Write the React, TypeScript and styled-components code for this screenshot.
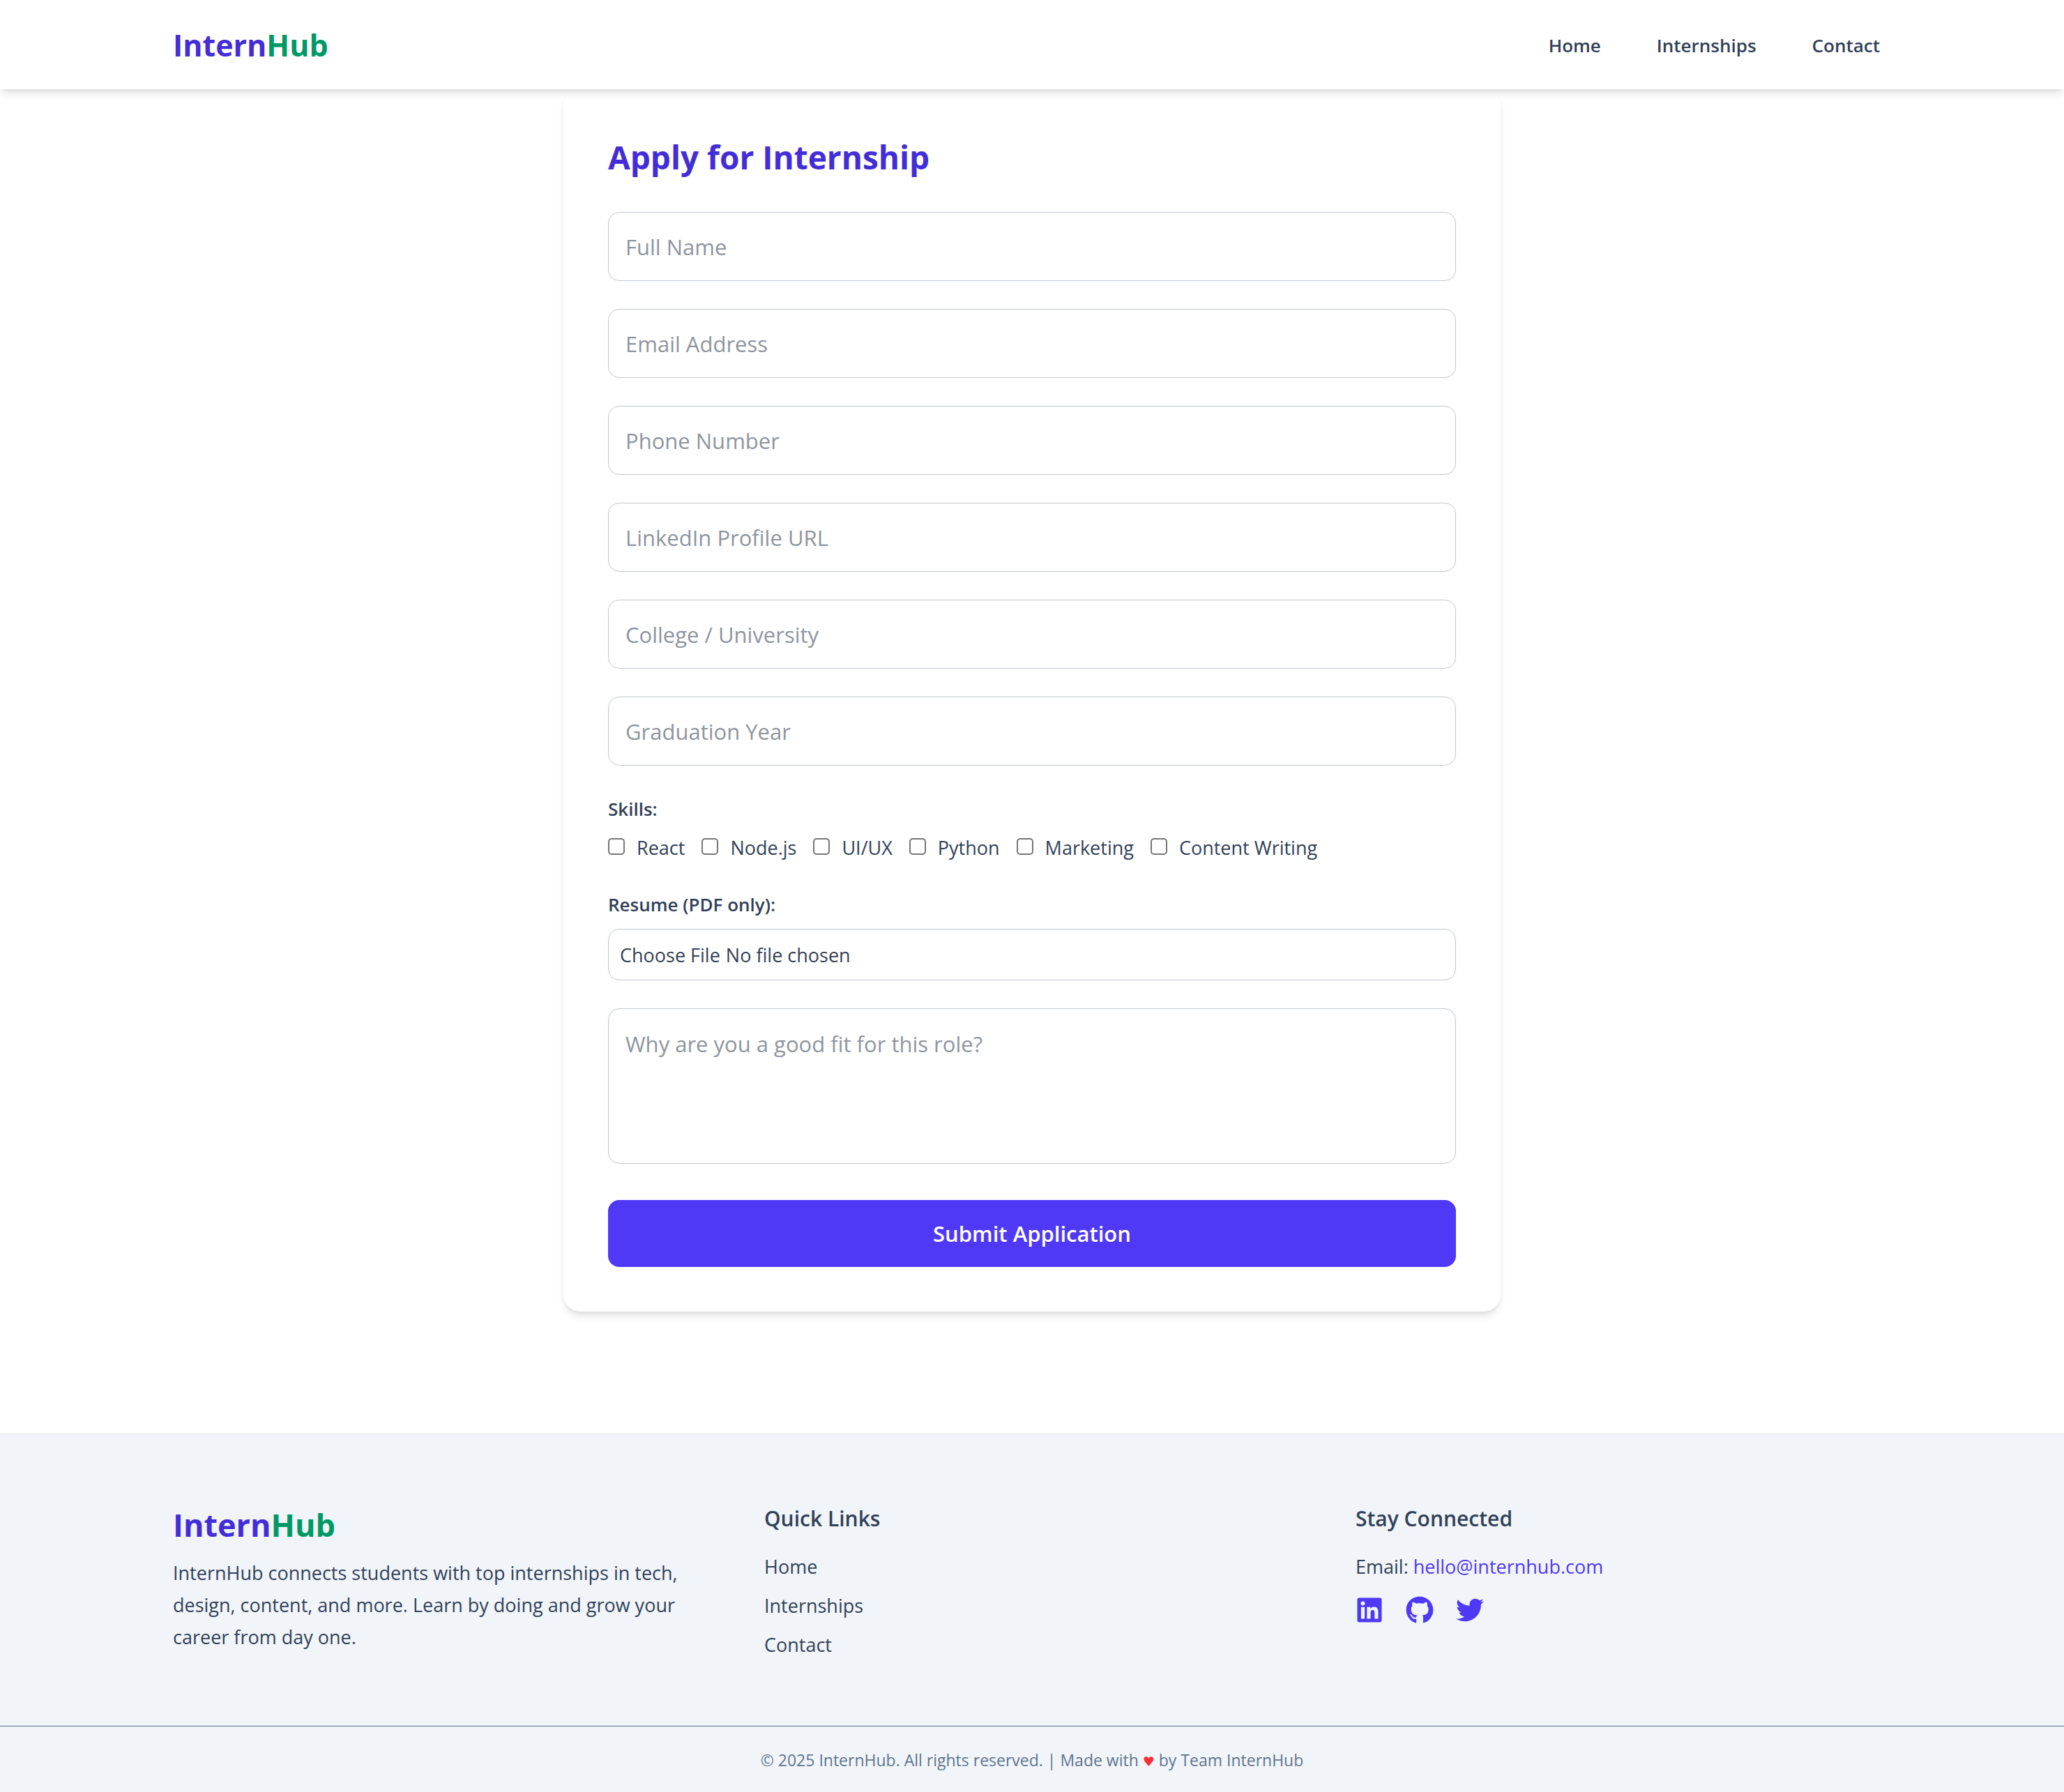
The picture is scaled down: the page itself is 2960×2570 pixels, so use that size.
import React from "react";
import styled, { createGlobalStyle } from "styled-components";
import { FaGithub, FaLinkedin, FaTwitter } from "react-icons/fa";

const GlobalStyle = createGlobalStyle`
  *, *::before, *::after {
    box-sizing: border-box;
  }

  body {
    margin: 0;
    background: #ffffff;
    color: #314158;
    font-family: "Segoe UI", "Open Sans", "Noto Sans", sans-serif;
    font-size: 27px;
    line-height: 40px;
  }

  h2, h3, p, ul, fieldset {
    margin: 0;
    padding: 0;
  }

  a {
    color: inherit;
    text-decoration: none;
  }

  input, textarea, button {
    margin: 0;
    font-family: inherit;
  }
`;

const Page = styled.div`
  display: flex;
  flex-direction: column;
  min-height: 100vh;
`;

const Container = styled.div`
  width: 100%;
  max-width: 2560px;
  margin: 0 auto;
  padding: 0 48px;
`;

const Header = styled.header`
  position: sticky;
  top: 0;
  z-index: 10;
  background: #ffffff;
  box-shadow: 0 8px 12px -2px rgba(0, 0, 0, 0.1), 0 4px 8px -4px rgba(0, 0, 0, 0.1);
`;

const HeaderRow = styled(Container)`
  display: flex;
  align-items: center;
  justify-content: space-between;
  padding-top: 33px;
  padding-bottom: 31px;
`;

const Brand = styled.a<{ $size: number; $line: number }>`
  display: block;
  color: #432dd7;
  font-size: ${(p) => p.$size}px;
  font-weight: 700;
  line-height: ${(p) => p.$line}px;
`;

const BrandAccent = styled.span`
  color: #009966;
`;

const Nav = styled.nav`
  display: flex;
  gap: 48px;
`;

const NavLink = styled.a`
  padding: 0 16px;
  font-size: 26px;
  font-weight: 600;
`;

const Main = styled.main`
  flex: 1;
  padding-bottom: 96px;
`;

const Card = styled.section`
  max-width: 1344px;
  margin: 0 auto;
  padding: 64px;
  border-radius: 24px;
  background: #ffffff;
  box-shadow: 0 8px 12px -2px rgba(0, 0, 0, 0.1), 0 4px 8px -4px rgba(0, 0, 0, 0.1);
`;

const Title = styled.h2`
  margin-bottom: 46px;
  color: #432dd7;
  font-size: 46px;
  font-weight: 700;
  line-height: 66px;
`;

const Form = styled.form`
  display: flex;
  flex-direction: column;
  gap: 40px;
`;

const TextField = styled.input`
  width: 100%;
  height: 99px;
  padding: 24px;
  border: 1px solid #c1c6cf;
  border-radius: 16px;
  background: transparent;
  color: #1e2939;
  font-size: 31px;
  line-height: 48px;

  &::placeholder {
    color: #8e959f;
    opacity: 1;
  }
`;

const MessageField = styled(TextField).attrs({ as: "textarea" })`
  display: block;
  height: 223px;
  padding: 26px 24px;
  resize: none;
`;

const Group = styled.div`
  display: flex;
  flex-direction: column;
  gap: 14px;
`;

const SkillSet = styled.fieldset`
  border: 0;
  min-width: 0;
`;

const Legend = styled.legend`
  display: block;
  margin-bottom: 14px;
  padding: 0;
  font-size: 26px;
  font-weight: 600;
  line-height: 44px;
`;

const GroupLabel = styled.label`
  font-size: 26px;
  font-weight: 600;
  line-height: 42px;
`;

const SkillRow = styled.div`
  display: flex;
  flex-wrap: wrap;
  gap: 24px;
`;

const Skill = styled.label`
  display: flex;
  align-items: baseline;
  gap: 17px;
`;

const Checkbox = styled.input`
  appearance: none;
  width: 24px;
  height: 24px;
  border: 2px solid #767676;
  border-radius: 5px;
  background: #ffffff;

  &:checked {
    border-color: #4f39f6;
    background: #4f39f6;
  }
`;

const FileField = styled.input`
  width: 100%;
  height: 74px;
  padding: 17px 16px 15px;
  border: 1px solid #c1c6cf;
  border-radius: 16px;
  color: #364153;
  font-size: 27px;
  line-height: 40px;

  &::file-selector-button {
    margin: 0 8px 0 0;
    padding: 0;
    border: 0;
    background: transparent;
    color: inherit;
    font: inherit;
  }
`;

const SubmitButton = styled.button`
  margin-top: 12px;
  padding: 24px;
  border: 0;
  border-radius: 16px;
  background: #4f39f6;
  color: #ffffff;
  font-size: 31px;
  font-weight: 600;
  line-height: 48px;
  cursor: pointer;
`;

const Footer = styled.footer`
  border-top: 1px solid #d9e1eb;
  background: #f1f5f9;
`;

const FooterGrid = styled(Container)`
  display: grid;
  grid-template-columns: repeat(3, 1fr);
  gap: 80px;
  padding-top: 96px;
  padding-bottom: 96px;
`;

const About = styled.p`
  margin-top: 12px;
  line-height: 46px;
`;

const FooterHeading = styled.h3`
  margin-bottom: 24px;
  font-size: 30px;
  font-weight: 600;
  line-height: 50px;
`;

const LinkList = styled.ul`
  display: flex;
  flex-direction: column;
  gap: 16px;
  list-style: none;
`;

const EmailLink = styled.a`
  color: #4f39f6;
`;

const Socials = styled.div`
  display: flex;
  gap: 32px;
  margin-top: 22px;
  color: #4f39f6;
  font-size: 40px;
`;

const SocialLink = styled.a`
  display: flex;
`;

const Copyright = styled.p`
  padding: 32px 48px 30px;
  border-top: 1px solid #52658a;
  color: #62748e;
  font-size: 23px;
  line-height: 32px;
  text-align: center;
`;

const Heart = styled.span`
  color: #fb2c36;
  font-family: "DejaVu Sans", sans-serif;
  font-size: 19px;
  line-height: 1;
`;

const links = ["Home", "Internships", "Contact"];

const fields = [
  { name: "name", type: "text", label: "Full Name" },
  { name: "email", type: "email", label: "Email Address" },
  { name: "phone", type: "tel", label: "Phone Number" },
  { name: "linkedin", type: "url", label: "LinkedIn Profile URL" },
  { name: "college", type: "text", label: "College / University" },
  { name: "year", type: "text", label: "Graduation Year" },
];

const skills = ["React", "Node.js", "UI/UX", "Python", "Marketing", "Content Writing"];

const socials = [
  { label: "LinkedIn", Icon: FaLinkedin },
  { label: "GitHub", Icon: FaGithub },
  { label: "Twitter", Icon: FaTwitter },
];

function Logo({ size, line }: { size: number; line: number }) {
  return (
    <Brand href="#" $size={size} $line={line}>
      Intern<BrandAccent>Hub</BrandAccent>
    </Brand>
  );
}

function ApplicationForm() {
  return (
    <Form onSubmit={(e: React.FormEvent) => e.preventDefault()}>
      {fields.map((f) => (
        <TextField key={f.name} name={f.name} type={f.type} placeholder={f.label} aria-label={f.label} />
      ))}
      <SkillSet>
        <Legend>Skills:</Legend>
        <SkillRow>
          {skills.map((s) => (
            <Skill key={s}>
              <Checkbox type="checkbox" name="skills" value={s} />
              {s}
            </Skill>
          ))}
        </SkillRow>
      </SkillSet>
      <Group>
        <GroupLabel htmlFor="resume">Resume (PDF only):</GroupLabel>
        <FileField id="resume" name="resume" type="file" accept="application/pdf" />
      </Group>
      <MessageField
        name="reason"
        placeholder="Why are you a good fit for this role?"
        aria-label="Why are you a good fit for this role?"
      />
      <SubmitButton type="submit">Submit Application</SubmitButton>
    </Form>
  );
}

export default function App() {
  return (
    <Page>
      <GlobalStyle />
      <Header>
        <HeaderRow>
          <Logo size={43} line={64} />
          <Nav>
            {links.map((l) => (
              <NavLink key={l} href="#">{l}</NavLink>
            ))}
          </Nav>
        </HeaderRow>
      </Header>
      <Main>
        <Card>
          <Title>Apply for Internship</Title>
          <ApplicationForm />
        </Card>
      </Main>
      <Footer>
        <FooterGrid>
          <div>
            <Logo size={45} line={68} />
            <About>
              InternHub connects students with top internships in tech, design, content, and more. Learn by doing and
              grow your career from day one.
            </About>
          </div>
          <div>
            <FooterHeading>Quick Links</FooterHeading>
            <LinkList>
              {links.map((l) => (
                <li key={l}><a href="#">{l}</a></li>
              ))}
            </LinkList>
          </div>
          <div>
            <FooterHeading>Stay Connected</FooterHeading>
            <p>
              Email: <EmailLink href="mailto:hello@internhub.com">hello@internhub.com</EmailLink>
            </p>
            <Socials>
              {socials.map(({ label, Icon }) => (
                <SocialLink key={label} href="#" aria-label={label}><Icon /></SocialLink>
              ))}
            </Socials>
          </div>
        </FooterGrid>
        <Copyright>
          © 2025 InternHub. All rights reserved. | Made with <Heart>♥</Heart> by Team InternHub
        </Copyright>
      </Footer>
    </Page>
  );
}
